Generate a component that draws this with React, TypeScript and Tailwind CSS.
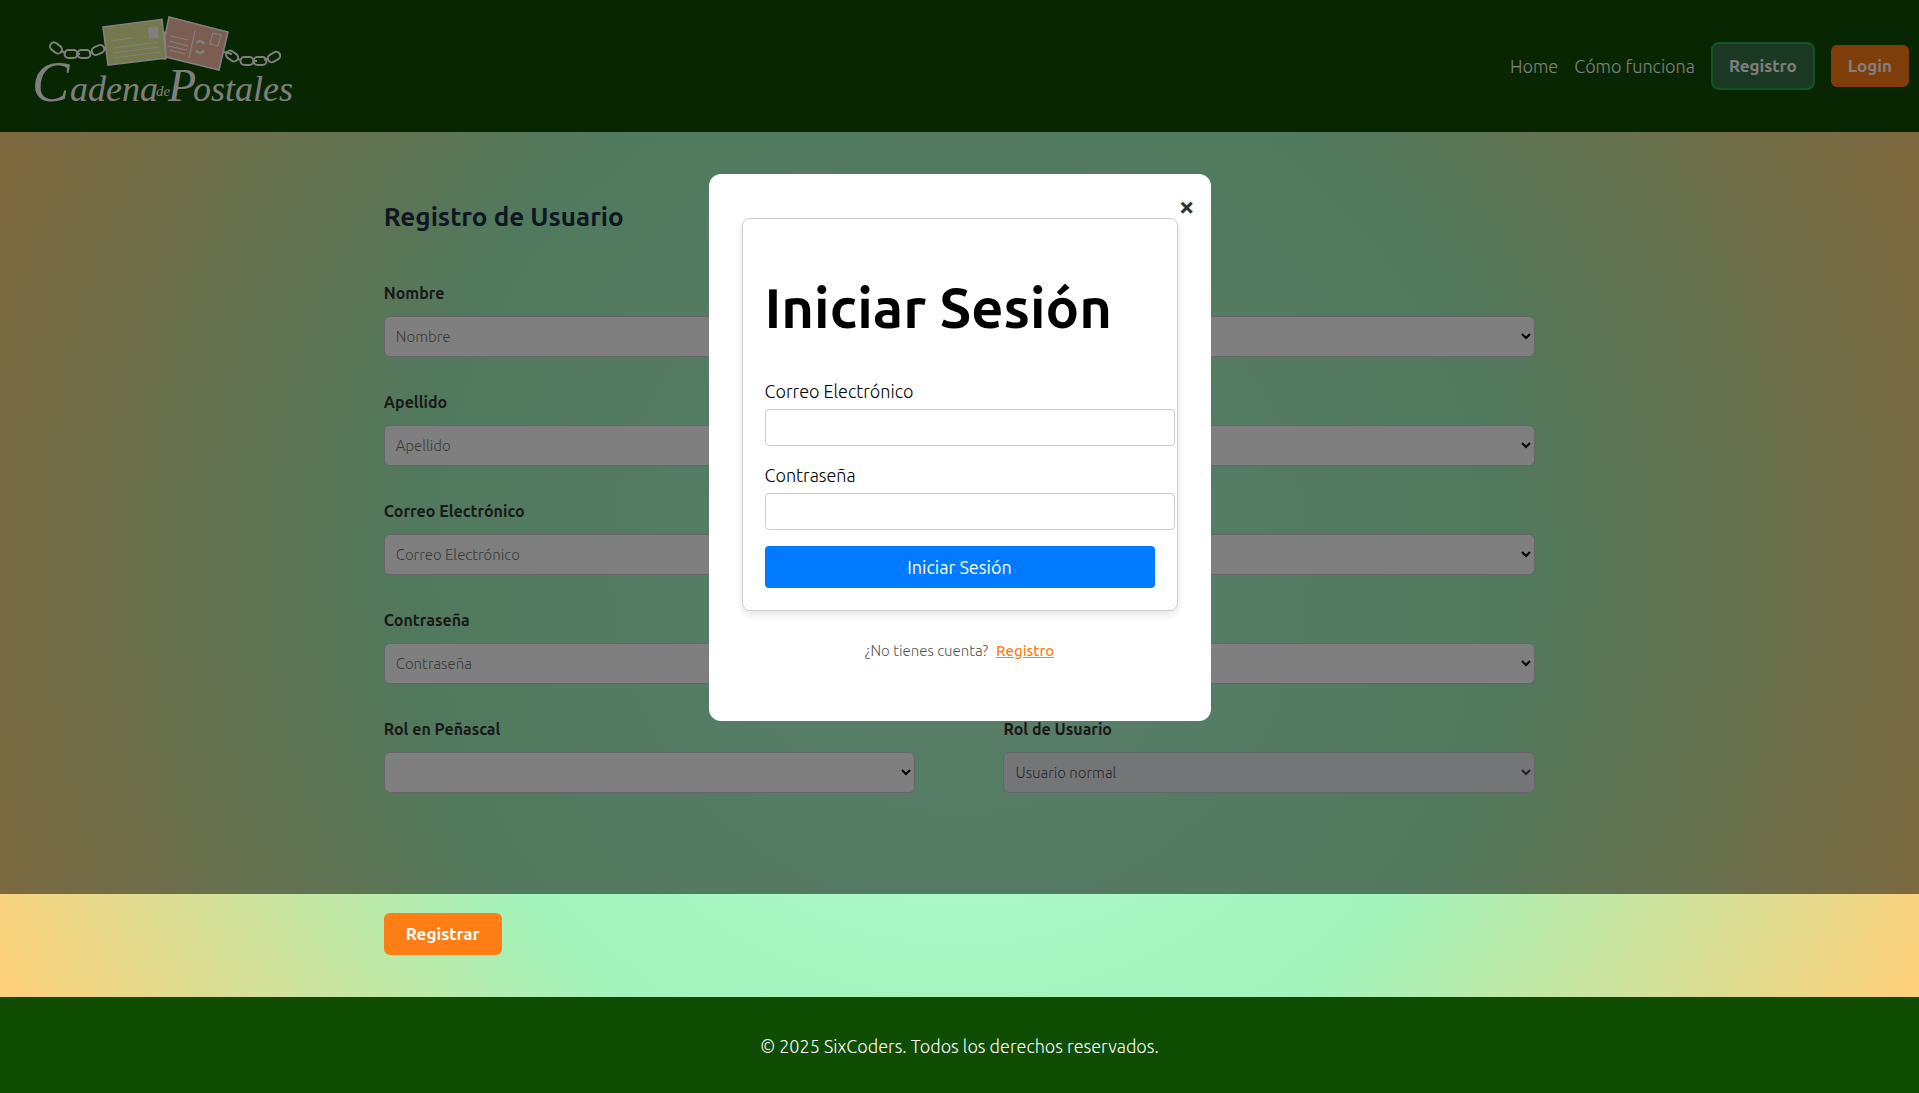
import type { ReactNode } from "react";

function Link({ x, y, r, w = 13 }: { x: number; y: number; r: number; w?: number }) {
  return <rect x={x - w / 2} y={y - 4} width={w} height={8} rx={4} transform={`rotate(${r} ${x} ${y})`} />;
}

function Logo() {
  return (
    <svg viewBox="0 0 310 120" className="h-[120px] w-[310px]" role="img" aria-label="Cadena de Postales">
      <g fill="none" stroke="#fff" strokeWidth="2">
        <Link x={56} y={48} r={38} />
        <Link x={71} y={54} r={0} />
        <Link x={84} y={54} r={0} />
        <Link x={98} y={50} r={-25} />
        <path d="M61 51l5 2M76 54h4M89 53l4-1M224 52l8 2M237 59l4 1M253 61h4M264 60l5-2" />
        <Link x={232} y={56} r={35} />
        <Link x={247} y={61} r={0} />
        <Link x={260} y={61} r={0} />
        <Link x={274} y={57} r={-30} />
      </g>
      <g stroke="#fff" strokeWidth="1.6">
        <path d="M162 31l5 3-2 25-5-1Z" fill="#fff" />
        <path d="M103 27L162 19.500L166 58L108 65Z" fill="#e9f29a" />
        <path d="M169 17L228 32L219 70L166 57L165 36Z" fill="#f7bca2" />
        <g fill="none" strokeWidth="1.2">
          <path d="M111 41l21-3M113 48l46-6M113 53l46-6M114 58l46-6" />
          <path d="M171 36l17 4M169 41l19 5M168 46l19 4M169 50l16 4M195 31l-6 27M213 33l8 2-3 11-8-2Z" />
        </g>
        <path d="M149 28l8-1 1 10-8 1Z" fill="#fff" />
        <path d="M197 43c2-3 6-2 7 1M196 50c2 4 6 4 8 0" fill="none" strokeWidth="2.500" />
      </g>
      <g fill="#fff" className="font-['Liberation_Serif',serif] italic">
        <text y="101">
          <tspan x="32" fontSize="56">C</tspan>
          <tspan x="70" fontSize="36">adena</tspan>
        </text>
        <text x="156" y="96" fontSize="15">de</text>
        <text y="101">
          <tspan x="168" fontSize="46">P</tspan>
          <tspan x="193" fontSize="36">ostales</tspan>
        </text>
      </g>
    </svg>
  );
}

const inputStyle =
  "h-[41px] w-full rounded-md border border-[#ccc] bg-white px-[11px] text-[15px] font-light text-black placeholder:text-[#757575]";
const selectStyle = "h-[41px] w-full rounded-md border border-[#ccc] bg-white px-[7px] text-[15px] font-light text-black";

function Field({ id, label, children }: { id: string; label: string; children: ReactNode }) {
  return (
    <div className="flex flex-col gap-[11px]">
      <label htmlFor={id} className="text-base/6 font-bold text-[#333]">
        {label}
      </label>
      {children}
    </div>
  );
}

function TextField({ id, label, type = "text" }: { id: string; label: string; type?: string }) {
  return (
    <Field id={id} label={label}>
      <input id={id} type={type} placeholder={label} className={inputStyle} />
    </Field>
  );
}

function PlainSelect({ name }: { name: string }) {
  return (
    <div className="flex flex-col justify-end">
      <select aria-label={name} className={selectStyle} />
    </div>
  );
}

function LoginField({ id, label, type }: { id: string; label: string; type: string }) {
  return (
    <div className="mb-4 flex flex-col gap-[5px]">
      <label htmlFor={id} className="leading-[26px]">
        {label}
      </label>
      <input id={id} type={type} className="-mr-5 h-[37px] rounded-sm border border-[#ccc] px-2" />
    </div>
  );
}

function LoginDialog() {
  return (
    <div className="absolute inset-x-0 top-0 flex h-[894px] items-center justify-center bg-black/50">
      <section role="dialog" aria-label="Iniciar Sesión" className="relative w-[502px] rounded-xl bg-white px-[33px] pt-11 pb-[58px] text-black">
        <button type="button" aria-label="Cerrar" className="absolute top-[14px] right-4 text-[28px]/9 font-bold text-[#333]">
          ×
        </button>
        <form className="rounded-lg border border-[#ccc] p-[22px] shadow-[0_4px_8px_rgba(0,0,0,0.1)]">
          <h1 className="mt-[25px] mb-7 text-[56px]/[84px] font-bold">Iniciar Sesión</h1>
          <LoginField id="login-email" label="Correo Electrónico" type="email" />
          <LoginField id="login-password" label="Contraseña" type="password" />
          <button type="button" className="h-[42px] w-full rounded-sm bg-[#007bff] font-normal text-white">
            Iniciar Sesión
          </button>
        </form>
        <p className="mt-7 flex justify-center gap-2 text-[15px]/6 text-[#555]">
          ¿No tienes cuenta?
          <a href="#registro" className="font-medium text-[#ff7f16] underline">
            Registro
          </a>
        </p>
      </section>
    </div>
  );
}

export default function App() {
  return (
    <div className="relative flex min-h-screen flex-col font-['Ubuntu',sans-serif] text-[18px]/[26px] font-light">
      <header className="flex h-[132px] items-center justify-between bg-[#0f4d02] pr-[10px] text-white">
        <a href="#inicio" className="-mt-3">
          <Logo />
        </a>
        <nav className="flex items-center gap-4">
          <a href="#home">Home</a>
          <a href="#como-funciona">Cómo funciona</a>
          <a href="#registro" className="rounded-lg border-2 border-[#26a84c] bg-[#367044] px-4 py-[9px] text-[17px] font-bold">
            Registro
          </a>
          <button type="button" className="rounded-md bg-[#ff7b14] px-[17px] py-2 text-[17px] font-bold">
            Login
          </button>
        </nav>
      </header>

      <main className="grow bg-[radial-gradient(circle,#b4ffd8_0%,#a2f3bb_52%,#ffd07a_100%)] pb-[42px]">
        <form className="mx-auto w-3/5 pt-16">
          <h2 className="text-[26px]/[42px] font-bold text-[#1f2e45]">Registro de Usuario</h2>
          <div className="mt-[43px] grid grid-cols-2 gap-x-[88px] gap-y-[33px]">
            <TextField id="nombre" label="Nombre" />
            <PlainSelect name="Opción 1" />
            <TextField id="apellido" label="Apellido" />
            <PlainSelect name="Opción 2" />
            <TextField id="correo" label="Correo Electrónico" />
            <PlainSelect name="Opción 3" />
            <TextField id="contrasena" label="Contraseña" type="password" />
            <PlainSelect name="Opción 4" />
            <Field id="rol-penascal" label="Rol en Peñascal">
              <select id="rol-penascal" className={selectStyle} />
            </Field>
            <Field id="rol-usuario" label="Rol de Usuario">
              <select
                id="rol-usuario"
                disabled
                className="h-[41px] w-full rounded-md border border-[#ccc] bg-[#e9eaed] px-[7px] text-[15px] font-light text-black/70"
              >
                <option>Usuario normal</option>
              </select>
            </Field>
          </div>
          <button type="button" className="mt-[120px] h-[42px] rounded-md bg-[#ff7f16] px-[22px] text-[17px] font-bold text-white">
            Registrar
          </button>
        </form>
      </main>

      <footer className="bg-[#0f4d02] pt-9 pb-[34px] text-center text-white">© 2025 SixCoders. Todos los derechos reservados.</footer>

      <LoginDialog />
    </div>
  );
}
